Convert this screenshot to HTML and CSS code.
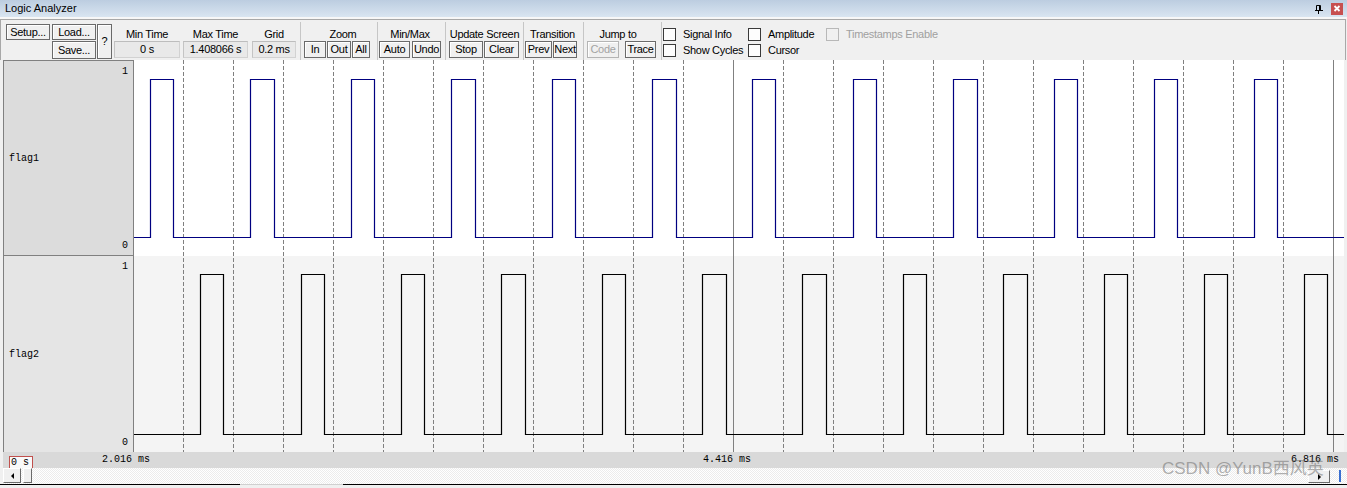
FILE: index.html
```html
<!DOCTYPE html>
<html>
<head>
<meta charset="utf-8">
<title>Logic Analyzer</title>
<link rel="stylesheet" href="styles.css">
</head>
<body>
<div class="titlebar">
  <span class="title">Logic Analyzer</span>
  <div class="title-icons">
    <svg class="pin" width="8" height="9" viewBox="0 0 8 9"><path d="M1.5 0.5H5.5V5.5M1.5 0.5V5M4.5 0.5V5M0 5.5H8M3.5 6V9" stroke="#000" fill="none"/></svg>
    <span class="close"><svg width="12" height="12" viewBox="0 0 12 12"><path d="M3.5 3L8.5 8M8.5 3L3.5 8" stroke="#fff" stroke-width="1.8"/></svg></span>
  </div>
</div>

<div class="toolbar">
  <div class="filebtns">
    <button class="btn b-setup">Setup...</button>
    <button class="btn b-load">Load...</button>
    <button class="btn b-help">?</button>
    <button class="btn b-save">Save...</button>
  </div>

  <div class="fields">
    <div class="fgrp f-min"><div class="glabel">Min Time</div><div class="field">0 s</div></div>
    <div class="fgrp f-max"><div class="glabel">Max Time</div><div class="field">1.408066 s</div></div>
    <div class="fgrp f-grid"><div class="glabel">Grid</div><div class="field">0.2 ms</div></div>
  </div>

  <div class="sep"></div>
  <div class="grp g-zoom">
    <div class="glabel">Zoom</div>
    <div class="brow"><button class="btn b-in">In</button><button class="btn b-out">Out</button><button class="btn b-all">All</button></div>
  </div>
  <div class="sep"></div>
  <div class="grp g-minmax">
    <div class="glabel">Min/Max</div>
    <div class="brow"><button class="btn b-auto">Auto</button><button class="btn b-undo">Undo</button></div>
  </div>
  <div class="sep"></div>
  <div class="grp g-update">
    <div class="glabel">Update Screen</div>
    <div class="brow"><button class="btn b-stop">Stop</button><button class="btn b-clear">Clear</button></div>
  </div>
  <div class="sep"></div>
  <div class="grp g-trans">
    <div class="glabel">Transition</div>
    <div class="brow"><button class="btn b-prev">Prev</button><button class="btn b-next">Next</button></div>
  </div>
  <div class="sep"></div>
  <div class="grp g-jump">
    <div class="glabel">Jump to</div>
    <div class="brow"><button class="btn b-code disabled">Code</button><button class="btn b-trace">Trace</button></div>
  </div>
  <div class="sep"></div>
  <div class="checks">
    <label class="chk"><span class="box"></span>Signal Info</label>
    <label class="chk"><span class="box"></span>Amplitude</label>
    <label class="chk disabled"><span class="box"></span>Timestamps Enable</label>
    <label class="chk"><span class="box"></span>Show Cycles</label>
    <label class="chk"><span class="box"></span>Cursor</label>
  </div>
</div>

<div class="main">
  <div class="labels">
    <div class="sig sig1">
      <div class="lv">1</div>
      <div class="name">flag1</div>
      <div class="lv">0</div>
    </div>
    <div class="sig sig2">
      <div class="lv">1</div>
      <div class="name">flag2</div>
      <div class="lv">0</div>
    </div>
  </div>
  <svg class="plot" width="1210" height="392" viewBox="134 60 1210 392">
    <rect x="134" y="60" width="1210" height="196" fill="#ffffff"/>
    <rect x="134" y="256" width="1210" height="196" fill="#f4f4f4"/>
    <path d="M183.5 60V452M233.5 60V452M283.5 60V452M333.5 60V452M383.5 60V452M433.5 60V452M483.5 60V452M533.5 60V452M583.5 60V452M633.5 60V452M683.5 60V452M783.5 60V452M833.5 60V452M883.5 60V452M933.5 60V452M983.5 60V452M1033.5 60V452M1083.5 60V452M1133.5 60V452M1183.5 60V452M1233.5 60V452M1283.5 60V452" stroke="#808080" stroke-width="1" stroke-dasharray="4 2" fill="none"/>
    <path d="M733.5 60V452M1333.5 60V452" stroke="#808080" stroke-width="1" fill="none"/>
    <path d="M134 237.5H150.5V79.5H173.5V237.5H250.5V79.5H274.5V237.5H351.5V79.5H374.5V237.5H451.5V79.5H475.5V237.5H552.5V79.5H575.5V237.5H652.5V79.5H676.5V237.5H752.5V79.5H775.5V237.5H853.5V79.5H876.5V237.5H953.5V79.5H977.5V237.5H1054.5V79.5H1077.5V237.5H1154.5V79.5H1177.5V237.5H1254.5V79.5H1277.5V237.5H1344" stroke="#000080" stroke-width="1.2" fill="none"/>
    <path d="M134 434.5H200.5V274.5H223.5V434.5H301.5V274.5H324.5V434.5H401.5V274.5H424.5V434.5H501.5V274.5H525.5V434.5H602.5V274.5H625.5V434.5H702.5V274.5H726.5V434.5H802.5V274.5H826.5V434.5H903.5V274.5H926.5V434.5H1003.5V274.5H1027.5V434.5H1104.5V274.5H1127.5V434.5H1204.5V274.5H1227.5V434.5H1304.5V274.5H1327.5V434.5H1344" stroke="#000000" stroke-width="1.2" fill="none"/>
  </svg>
</div>

<div class="axis">
  <span class="zero">0 s</span>
  <span class="t1">2.016 ms</span>
  <span class="t2">4.416 ms</span>
  <span class="t3">6.816 ms</span>
</div>

<div class="scroll">
  <span class="sb-btn sb-left"><span class="tri-l"></span></span>
  <span class="sb-btn sb-thumb"></span>
  <span class="sb-btn sb-right"><span class="tri-r"></span></span>
  <span class="sb-end"></span>
</div>

<div class="bottom">
  <span class="seg seg1"></span>
  <span class="seg seg2"></span>
  <span class="seg seg3"></span>
</div>

<div class="wm">CSDN @YunB西风英</div>
</body>
</html>
```

FILE: styles.css
```css
* { box-sizing: border-box; margin: 0; padding: 0; }
html, body { width: 1347px; height: 488px; overflow: hidden; }
body {
  background: #f0f0f0;
  font-family: "Liberation Sans", Arial, sans-serif;
  font-size: 11px;
  color: #000;
  position: relative;
}

/* title bar */
.titlebar {
  height: 19px;
  display: flex;
  justify-content: space-between;
  align-items: flex-start;
  background: linear-gradient(#bccde0, #d9e5f1);
  border-bottom: 2px solid #f7f7f7;
}
.title { line-height: 17px; padding-left: 5px; color: #000; }
.title-icons { display: flex; align-items: flex-start; height: 17px; }
.pin { margin-top: 5px; margin-right: 8px; display: block; }
.close {
  display: block;
  width: 12px; height: 12px;
  margin-top: 3px; margin-right: 4px;
  background: #c75050;
}
.close svg { display: block; }

/* toolbar */
.toolbar {
  display: flex;
  height: 41px;
  margin-right: 1px;
  border: 1px solid #a8a8a8;
  border-bottom: none;
  background: #f0f0f0;
  letter-spacing: -0.3px;
}
.btn {
  appearance: none;
  font: inherit;
  font-size: 11px;
  letter-spacing: -0.3px;
  color: #000;
  background: #f0f0f0;
  border: 1px solid #6a6a6a;
  box-shadow: inset 1px 1px 0 #ffffff;
  height: 17px;
  line-height: 15px;
  padding: 0;
  text-align: center;
  white-space: nowrap;
  display: block;
}
.btn.disabled { color: #a3a3a3; border-color: #b4b4b4; }

.filebtns {
  display: grid;
  grid-template-columns: 44px 2px 44px 1px 15px;
  grid-template-rows: 16px 1px 18px;
  margin: 4px 0 0 5px;
  align-self: flex-start;
}
.b-setup { grid-column: 1; grid-row: 1; height: 16px; line-height: 14px; }
.b-load { grid-column: 3; grid-row: 1; height: 16px; line-height: 14px; }
.b-save { grid-column: 3; grid-row: 3; height: 18px; line-height: 16px; }
.b-help { grid-column: 5; grid-row: 1 / 4; height: 35px; line-height: 33px; }

.fields { display: flex; margin-left: 2px; padding-top: 7px; }
.fgrp { display: flex; flex-direction: column; }
.f-min { width: 66px; }
.f-max { width: 65px; margin-left: 3px; }
.f-grid { width: 44px; margin-left: 4px; }
.glabel { height: 14px; line-height: 14px; text-align: center; white-space: nowrap; }
.field {
  height: 17px;
  line-height: 15px;
  text-align: center;
  background: #e9e9e9;
  border: 1px solid #d2d2d2;
  border-top-color: #bdbdbd;
  border-left-color: #c4c4c4;
  white-space: nowrap;
}

.sep { width: 1px; background: #c6c6c6; margin-top: 2px; margin-left: 4px; }
.fields + .sep { margin-left: 4px; }
.grp + .sep { margin-left: 0; }

.grp { display: flex; flex-direction: column; padding-top: 7px; }
.brow { display: flex; }

.g-zoom { width: 76px; padding-left: 3px; }
.g-zoom .glabel { padding-left: 5px; }
.b-in { width: 22px; }
.b-out { width: 24px; margin-left: 1px; }
.b-all { width: 18px; margin-left: 1px; }

.g-minmax { width: 67px; padding-left: 1px; }
.g-minmax .glabel { padding-right: 4px; }
.b-auto { width: 31px; }
.b-undo { width: 29px; margin-left: 2px; }

.g-update { width: 77px; padding-left: 3px; }
.g-update .glabel { padding-right: 3px; }
.b-stop { width: 34px; }
.b-clear { width: 35px; margin-left: 1px; }

.g-trans { width: 59px; padding-left: 1px; }
.g-trans .glabel { padding-right: 3px; }
.b-prev { width: 27px; }
.b-next { width: 24px; margin-left: 1px; }

.g-jump { width: 77px; padding-left: 3px; }
.g-jump .glabel { padding-right: 12px; }
.b-code { width: 32px; }
.b-trace { width: 31px; margin-left: 6px; }

.checks {
  display: grid;
  grid-template-columns: 85px 78px auto;
  grid-template-rows: 13px 13px;
  row-gap: 3px;
  padding: 8px 0 0 1px;
  align-content: start;
}
.chk {
  display: flex;
  align-items: center;
  gap: 7px;
  line-height: 13px;
  white-space: nowrap;
  color: #000;
}
.box {
  display: block;
  width: 13px; height: 13px;
  border: 1px solid #3a3a3a;
  background: #fdfdfd;
}
.chk.disabled { color: #a0a0a0; }
.chk.disabled .box { border-color: #b8b8b8; background: #f0f0f0; }

/* main signal area */
.main { display: flex; height: 392px; padding-left: 3px; }
.labels {
  width: 131px;
  display: flex;
  flex-direction: column;
  border: 1px solid #808080;
  border-bottom: none;
}
.sig {
  display: flex;
  flex-direction: column;
  justify-content: space-between;
  font-family: "Liberation Mono", "DejaVu Sans Mono", monospace;
  font-size: 10px;
  line-height: 12px;
  padding: 5px 5px 3px 5px;
}
.sig1 { height: 195px; background: #dcdcdc; border-bottom: 1px solid #808080; }
.sig2 { height: 196px; background: #e5e5e5; }
.lv { text-align: right; }
.name { text-align: left; }
.plot { display: block; }

/* time axis */
.axis {
  height: 16px;
  margin-left: 3px;
  background: #d9d9d9;
  display: flex;
  font-family: "Liberation Mono", "DejaVu Sans Mono", monospace;
  font-size: 10px;
  line-height: 16px;
  white-space: pre;
}
.zero {
  display: block;
  margin: 4px 0 0 6px;
  width: 24px;
  height: 12px;
  border: 1px solid #c0504d;
  border-bottom: none;
  background: #f9f9f9;
  line-height: 11px;
  padding-left: 1px;
}
.t1 { margin-left: 69px; }
.t2 { margin-left: 553px; }
.t3 { margin-left: 540px; }

/* scrollbar */
.scroll {
  height: 16px;
  margin-left: 3px;
  display: flex;
  align-items: stretch;
  background-color: #ffffff;
  background-image: repeating-conic-gradient(#ececec 0 25%, #ffffff 0 50%);
  background-size: 2px 2px;
}
.sb-btn {
  display: flex;
  align-items: center;
  justify-content: center;
  background: #f0f0f0;
  border: 1px solid;
  border-color: #ffffff #6a6a6a #6a6a6a #ffffff;
}
.sb-left { width: 18px; height: 15px; }
.sb-thumb { width: 9px; height: 15px; margin-left: 2px; }
.sb-right { width: 22px; height: 13px; margin: 2px 0 0 auto; }
.sb-end { width: 2px; height: 12px; margin: 2px 6px 0 9px; background: #3a6fd0; }
.tri-l { width: 0; height: 0; border-top: 3px solid transparent; border-bottom: 3px solid transparent; border-right: 3px solid #000; }
.tri-r { width: 0; height: 0; border-top: 3px solid transparent; border-bottom: 3px solid transparent; border-left: 3px solid #000; }

/* bottom strip */
.bottom { height: 4px; display: flex; }
.seg { display: block; height: 4px; border-top: 1px solid #000; }
.seg1 { width: 240px; }
.seg2 { width: 103px; border-top-color: #d0d0d0; }
.seg3 { flex: 1; }

/* watermark overlay */
.wm {
  position: absolute;
  left: 1162px;
  top: 459px;
  font-family: "Liberation Sans", "Noto Sans CJK SC", sans-serif;
  font-size: 17px;
  line-height: 20px;
  color: rgba(110, 110, 110, 0.55);
  white-space: nowrap;
  pointer-events: none;
}
```
